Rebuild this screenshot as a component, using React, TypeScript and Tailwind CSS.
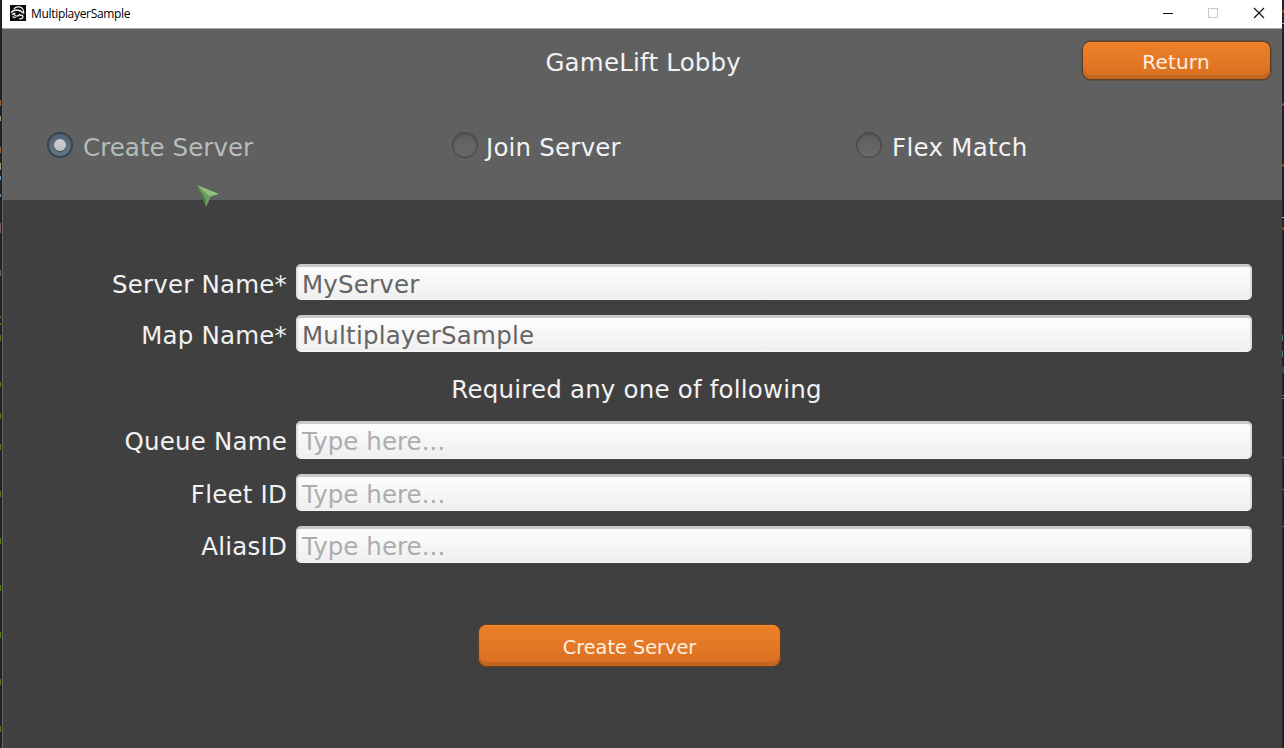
import React from "react";

function Logo() {
  return (
    <svg width="16" height="16" viewBox="0 0 16 16" className="relative -top-px shrink-0">
      <rect width="16" height="16" fill="#0b0b0b" />
      <g fill="none" stroke="#f4f4f4" strokeLinecap="round" strokeLinejoin="round">
        <path d="M4.2 3.6C6 1.6 9.4 1.2 11.6 2.8C13.2 4 13.8 5.6 13.8 7.4" strokeWidth="1.2" />
        <path d="M1.6 7.2C3.6 4.6 8.6 3.8 13.6 8" strokeWidth="1.5" />
        <path d="M2.4 9.4L5 8.2M4.2 9.6C5.8 11.8 8.2 11.4 9.6 9.4" strokeWidth="1.3" />
        <path d="M3 11.8L5 12.6M10.2 10.4C12.2 9.4 13.4 10.8 12.8 12.2C12.2 13.6 11 14.2 9.8 13.8" strokeWidth="1.3" />
      </g>
    </svg>
  );
}

function TitleBar() {
  return (
    <header className="flex h-7 shrink-0 items-center bg-white pl-2 font-['Open_Sans',sans-serif]">
      <Logo />
      <span className="ml-[5px] text-[12px] leading-4 tracking-[-0.32px] whitespace-nowrap text-black">MultiplayerSample</span>
      <svg width="12" height="12" viewBox="0 0 12 12" className="relative -top-px ml-auto mr-[33px]">
        <path d="M1 6.5H11" stroke="#111" />
      </svg>
      <svg width="12" height="12" viewBox="0 0 12 12" className="relative -top-px mr-[34px]">
        <rect x="1.5" y="1.5" width="9" height="9" fill="none" stroke="#c9c9c9" />
      </svg>
      <svg width="12" height="12" viewBox="0 0 12 12" className="relative -top-px mr-[17px]">
        <path d="M1 1L11 11M11 1L1 11" stroke="#111" strokeWidth="1.2" />
      </svg>
    </header>
  );
}

function Radio({ label, text, selected = false }: { label: string; text: string; selected?: boolean }) {
  return (
    <label className="flex h-[26px] items-center">
      {selected ? (
        <span className="flex size-[26px] items-center justify-center rounded-full border-2 border-[#39444e] bg-linear-to-b from-[#526373] to-[#647785]">
          <span className="size-3 rounded-full bg-linear-to-b from-[#d2d2d2] to-[#bcbcbc] shadow-[0_1px_1px_#3f4d59]" />
        </span>
      ) : (
        <span className="size-[26px] rounded-full border border-[#424242] bg-linear-to-b from-[#606060] to-[#686868] shadow-[inset_0_2px_2px_#505050]" />
      )}
      <span className={`relative top-[3px] whitespace-nowrap ${text}`}>{label}</span>
    </label>
  );
}

function OrangeButton({ label, size }: { label: string; size: string }) {
  return (
    <button
      className={`flex items-center justify-center rounded-[8px] bg-linear-to-b from-[#ee8028] to-[#d96f21] leading-6 text-[#fff0e2] shadow-[0_0_0_1.5px_#5b4127,inset_0_1px_0_#f78a2d,inset_0_-4px_1px_#c4651f] ${size}`}
    >
      {label}
    </button>
  );
}

function Field({ label, value = "", size, raised = false }: { label: string; value?: string; size: string; raised?: boolean }) {
  return (
    <div className={`flex shrink-0 items-center ${size}`}>
      <label className={`w-[284px] text-right whitespace-nowrap ${raised ? "pt-[3px]" : "pt-[5px]"}`}>{label}</label>
      <div
        className={`ml-[9px] flex h-full w-[956px] items-center rounded-[5px] border-x-2 border-t-[3px] border-b border-x-[#dedede] border-t-[#c9c9c9] border-b-[#f7f7f7] bg-linear-to-b from-[#fdfdfd] to-[#efefef] pl-1 ${raised ? "pt-[1px]" : "pt-[3px]"} ${value ? "text-[#656565]" : "tracking-[0.05px] text-[#adadad]"}`}
      >
        {value || "Type here..."}
      </div>
    </div>
  );
}

export default function App() {
  return (
    <div className="flex h-[748px] w-[1284px] overflow-hidden bg-[#1e1e1e] font-['DejaVu_Sans',sans-serif] text-[24.5px] leading-7 tracking-[0.2px] text-[#f2f2f2]">
      <svg width="2" height="748" className="shrink-0">
        <rect width="2" height="748" fill="#202225" />
        <path d="M.5 100v6M.5 147v6" stroke="#98643a" />
        <path d="M.5 116v5M.5 163v7" stroke="#a39373" />
        <path d="M.5 176v4M.5 194v3" stroke="#6a91af" />
        <path d="M.5 223v10M.5 270v6" stroke="#785d61" />
        <path d="M.5 316v2M.5 323v2M.5 335v6M.5 382v5M.5 413v6M.5 444v6M.5 491v6M.5 538v6M.5 585v6" stroke="#587f16" />
        <path d="M.5 632v6M.5 679v6M.5 726v6" stroke="#587f16" />
      </svg>
      <div className="flex w-[1280px] flex-col bg-[#404040]">
        <TitleBar />
        <section className="h-[172px] shrink-0 border-t border-l border-t-[#a8a8a8] border-l-[#666666] bg-[#606060]">
          <div className="grid h-[63px] grid-cols-[1fr_187px] pt-[12.5px] pr-[12.5px]">
            <h1 className="relative top-[7.5px] pl-[201px] text-center">GameLift Lobby</h1>
            <OrangeButton label="Return" size="h-[37px] text-[20px] pt-[3px]" />
          </div>
          <nav className="grid grid-cols-[405px_404px_1fr] pt-10 pl-11">
            <Radio label="Create Server" text="ml-[10px] tracking-[0.05px] text-[#b4bdbb]" selected />
            <Radio label="Join Server" text="ml-2" />
            <Radio label="Flex Match" text="ml-[10px] tracking-[0.3px]" />
          </nav>
        </section>
        <main className="flex flex-1 flex-col border-l border-[#666666] pt-16">
          <Field label="Server Name*" value="MyServer" size="h-9" />
          <Field label="Map Name*" value="MultiplayerSample" size="mt-[15px] h-[37px]" />
          <p className="h-[69px] pt-6 pr-[12px] text-center whitespace-nowrap">Required any one of following</p>
          <Field label="Queue Name" size="h-[38px]" raised />
          <Field label="Fleet ID" size="mt-[15px] h-[37px]" />
          <Field label="AliasID" size="mt-[15px] h-[37px]" />
          <OrangeButton label="Create Server" size="mt-[62px] ml-[476px] h-[41px] w-[301px] text-[19.3px] tracking-normal pt-[5px]" />
        </main>
      </div>
      <svg width="2" height="748" className="shrink-0">
        <rect width="2" height="748" fill="#202225" />
        <path d="M0 11.5h2M0 104.5h2M0 165.5h2M0 228.5h2" stroke="#80634c" strokeWidth="2" />
        <path d="M0 23.5h2M0 217.5h2" stroke="#aaa" />
        <path d="M.5 335v6M.5 351v6M1 367v6" stroke="#437b75" />
        <path d="M0 395.5h2M0 398.5h2M0 457.5h2M0 489.5h2M0 526.5h2" stroke="#50716d" />
      </svg>
      <svg width="24" height="24" viewBox="0 0 24 24" className="absolute top-[184px] left-[196px]">
        <path d="M1 1L23 10L14.5 13L10 23Z" fill="#55834b" />
        <path d="M1 1L23 10L12 13Z" fill="#91bf80" />
        <path d="M1 1L12 13L10 23Z" fill="#4c7841" />
        <path d="M1 1L14.5 13L10 23L9 14Z" fill="#6d9e5e" />
      </svg>
    </div>
  );
}
